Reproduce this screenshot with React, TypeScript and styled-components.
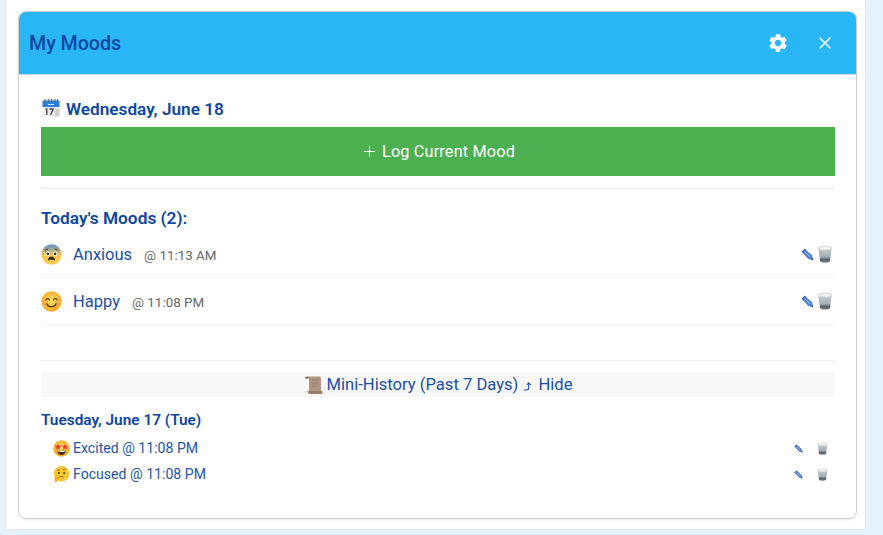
import React from "react";
import styled, { createGlobalStyle } from "styled-components";
import { MdSettings } from "react-icons/md";
import { X, Plus } from "lucide-react";

const Global = createGlobalStyle`
  html, body { margin: 0; padding: 0; background: #e3f2fd; font-family: Roboto, "Liberation Sans", sans-serif; overflow: hidden; }
`;

const Page = styled.div`
  width: 883px;
  height: 535px;
  padding: 0 17px 5px 5px;
  box-sizing: border-box;
`;
const Sheet = styled.div`
  height: 100%;
  background: #fff;
  border: 1px solid #e4e9ee;
  border-top: none;
  box-sizing: border-box;
  padding: 11px 8px 0 12px;
`;
const Modal = styled.div`
  height: 508px;
  box-sizing: border-box;
  border: 1px solid #cfcfcf;
  border-radius: 8px;
  box-shadow: 0 1px 2px rgba(0,0,0,.08);
  overflow: hidden;
`;
const Header = styled.header`
  height: 63px;
  background: #29b6f6;
  border-bottom: 1px solid #d4d8da;
  display: flex;
  align-items: center;
  padding: 0 21px 0 10px;
  box-sizing: border-box;
`;
const Title = styled.h2`
  margin: 0;
  flex: 1;
  font-size: 19.6px;
  font-weight: 500;
  color: #0d47a1;
`;
const IconBtn = styled.span<{ $gap?: number }>`
  display: flex;
  color: #fff;
  margin-left: ${p => p.$gap ?? 0}px;
`;
const Body = styled.div`
  padding: 23px 21px 0 22px;
`;
const DateRow = styled.h3`
  margin: 0 0 8px;
  height: 21px;
  display: flex;
  align-items: center;
  gap: 5px;
  font-size: 17.2px;
  font-weight: 600;
  color: #0d47a1;
`;
const LogButton = styled.button`
  width: 100%;
  height: 49px;
  border: none;
  background: #4caf50;
  color: #fff;
  font: 400 16.3px Roboto, sans-serif;
  display: flex;
  align-items: center;
  justify-content: center;
  gap: 4px;
  letter-spacing: .15px;
`;
const Divider = styled.div<{ $top: number }>`
  height: 1px;
  background: #eeeeee;
  margin-top: ${p => p.$top}px;
`;
const SectionTitle = styled.h4`
  margin: 19px 0 3px;
  font-size: 17.3px;
  line-height: 20px;
  font-weight: 600;
  color: #0d47a1;
`;
const MoodRow = styled.div`
  height: 47px;
  display: flex;
  align-items: center;
  border-bottom: 1px solid #f3f3f3;
  box-sizing: border-box;
`;
const MoodName = styled.span`
  margin-left: 11px;
  font-size: 16.5px;
  color: #1a4fa6;
`;
const MoodTime = styled.span`
  margin-left: 12px;
  margin-top: 2px;
  font-size: 13.4px;
  color: #666;
`;
const Spacer = styled.span`flex: 1;`;
const Actions = styled.span<{ $gap: number; $right: number }>`
  display: flex;
  align-items: center;
  gap: ${p => p.$gap}px;
  margin-right: ${p => p.$right}px;
`;
const HistoryBar = styled.div`
  margin-top: 11px;
  height: 25px;
  background: #f8f8f8;
  display: flex;
  align-items: center;
  justify-content: center;
  gap: 4px;
  font-size: 16.6px;
  color: #1a4fa6;
`;
const DayTitle = styled.div`
  margin-top: 14px;
  font-size: 15.4px;
  line-height: 18px;
  font-weight: 600;
  color: #0d47a1;
`;
const DayRow = styled.div`
  height: 26px;
  padding-left: 12px;
  display: flex;
  align-items: center;
  gap: 3px;
  font-size: 14.1px;
  color: #2355a8;
  &:first-of-type { margin-top: 6px; }
`;
const Days = styled.div``;

const Face = ({ size, children }: { size: number; children: React.ReactNode }) => (
  <svg width={size} height={size} viewBox="0 0 32 32" style={{ flex: "none" }}>
    <defs>
      <radialGradient id="fg" cx="50%" cy="45%" r="55%">
        <stop offset="0" stopColor="#fde26a" /><stop offset="1" stopColor="#f5a623" />
      </radialGradient>
      <linearGradient id="fb" x1="0" y1="0" x2="0" y2="1">
        <stop offset="0" stopColor="#5e8fd0" /><stop offset=".55" stopColor="#f5c94a" />
      </linearGradient>
    </defs>
    {children}
  </svg>
);
const Fearful = ({ size }: { size: number }) => (
  <Face size={size}>
    <circle cx="16" cy="16" r="15.500" fill="url(#fb)" />
    <circle cx="10.500" cy="15" r="3.400" fill="#fff" /><circle cx="21.500" cy="15" r="3.400" fill="#fff" />
    <circle cx="10.500" cy="15" r="2" fill="#3b2a1a" /><circle cx="21.500" cy="15" r="2" fill="#3b2a1a" />
    <path d="M6 9.500 11 7.500M26 9.500 21 7.500" stroke="#3b2a1a" strokeWidth="1.400" fill="none" />
    <path d="M10.500 25c0-4 2.400-6 5.500-6s5.500 2 5.500 6c-3-1.500-8-1.500-11 0z" fill="#3b2a1a" />
  </Face>
);
const Smiling = ({ size }: { size: number }) => (
  <Face size={size}>
    <circle cx="16" cy="16" r="15.500" fill="url(#fg)" />
    <circle cx="7" cy="19" r="3.500" fill="#f58a5c" opacity=".55" /><circle cx="25" cy="19" r="3.500" fill="#f58a5c" opacity=".55" />
    <path d="M7.500 13.500c1-2.500 4.500-2.500 5.500 0M19 13.500c1-2.500 4.500-2.500 5.500 0" stroke="#4a3418" strokeWidth="1.700" fill="none" strokeLinecap="round" />
    <path d="M9 19.500c2 6 12 6 14 0" stroke="#4a3418" strokeWidth="1.800" fill="none" strokeLinecap="round" />
  </Face>
);
const Star = ({ x, y }: { x: number; y: number }) => (
  <path transform={`translate(${x} ${y})`} d="M0-6 1.800-2 6-1.800 2.800 1 3.800 5.200 0 3 -3.800 5.200-2.800 1-6-1.800-1.800-2z" fill="#e53935" />
);
const StarStruck = ({ size }: { size: number }) => (
  <Face size={size}>
    <circle cx="16" cy="16" r="15.500" fill="url(#fg)" />
    <Star x={9.500} y={13} /><Star x={22.500} y={13} />
    <path d="M8 20h16c0 5-3.500 8-8 8s-8-3-8-8z" fill="#4a2c16" />
    <path d="M10 20.500h12v2H10z" fill="#fff" />
  </Face>
);
const Thinking = ({ size }: { size: number }) => (
  <Face size={size}>
    <circle cx="16" cy="14.500" r="14.500" fill="#f9c733" />
    <path d="M8 8.500c1.500-1.500 4-1.500 5 0M19 7c1.500-1.500 4-1 5 .5" stroke="#5a3d14" strokeWidth="1.500" fill="none" />
    <circle cx="11" cy="13" r="1.900" fill="#5a3d14" /><circle cx="21" cy="13" r="1.900" fill="#5a3d14" />
    <path d="M12 21c2.500-1.500 5.500-1.500 8 0" stroke="#5a3d14" strokeWidth="1.500" fill="none" />
    <path d="M3 22c3-1.500 6-1.500 9 0 1 1 .5 2-.5 2.500l-2 .5c0 3-2 5.500-4 5.500S2.500 26 3 22z" fill="#f2ad1f" />
  </Face>
);
const Calendar = () => (
  <svg width="20" height="20" viewBox="0 0 20 20" style={{ flex: "none", marginTop: "-2px" }}>
    <rect x="1.500" y="2.500" width="17" height="16" rx="1" fill="#eeeeee" />
    <rect x="14" y="11" width="4.500" height="7.500" fill="#cfcfcf" />
    <path d="M1.500 3.500a1 1 0 0 1 1-1h15a1 1 0 0 1 1 1V9h-17z" fill="#2f80d8" />
    <path d="M4 1v3M7.300 1v3M10.600 1v3M14 1v3M16.500 1v3" stroke="#5a6770" strokeWidth="1.100" />
    <path d="M7 6.500h6" stroke="#cfe4f8" strokeWidth="1" />
    <path d="M4.500 11h1.300v6M8.500 11h3.700L9.600 17" stroke="#444" strokeWidth="1.300" fill="none" />
  </svg>
);
const Scroll = () => (
  <svg width="19" height="20" viewBox="0 0 19 20" style={{ flex: "none" }}>
    <path d="M3 1.500h12.500c1 0 1.500 1 1.500 2v12.500H5V3.500C5 2.500 4 1.500 3 1.500z" fill="#b09583" />
    <path d="M3 1.500C1.500 1.500 1 2.500 1 3.500h4C5 2.500 4 1.500 3 1.500z" fill="#7d6351" />
    <path d="M7.500 5h7M7.500 8h7M7.500 11h7" stroke="#988070" strokeWidth=".9" />
    <path d="M3.500 16h14c.7 0 1 .7 1 1.500s-.8 1.500-1.500 1.500H6c-1.300 0-2.500-1.300-2.500-3z" fill="#977c69" />
  </svg>
);
const Pencil = ({ size }: { size: number }) => (
  <svg width={size} height={size} viewBox="0 0 14 14" style={{ flex: "none" }}>
    <path d="M.8 4 4 .8 11.800 7.800 13.300 13.300 7.800 11.800z" fill="#4f7fd6" />
    <path d="M.8 4 4 .8 5.300 2 2 5.300z" fill="#3a68c0" />
    <path d="M3.800 4 9.800 9.600" stroke="#b9d0f5" strokeWidth="1" />
    <path d="M11 12.500 13.300 13.300 12.500 11z" fill="#334" />
  </svg>
);
const Trash = ({ size }: { size: number }) => (
  <svg width={size} height={size} viewBox="0 0 18 18" style={{ flex: "none" }}>
    <defs>
      <linearGradient id="tg" x1="0" y1="0" x2="0" y2="1">
        <stop offset="0" stopColor="#c6cdd1" /><stop offset=".6" stopColor="#a4adb3" /><stop offset=".78" stopColor="#59636a" /><stop offset="1" stopColor="#6c767c" />
      </linearGradient>
    </defs>
    <path d="M2.300 3.500 4 16c.1.900 1.500 1.500 5 1.500s4.900-.6 5-1.500l1.700-12.500z" fill="url(#tg)" />
    <ellipse cx="9" cy="3" rx="7.200" ry="2.300" fill="#d6dadc" />
    <ellipse cx="9" cy="3.300" rx="5.500" ry="1.300" fill="#f2f3f4" />
  </svg>
);
const ReturnArrow = () => (
  <svg width="12" height="12" viewBox="0 0 12 12" style={{ flex: "none", margin: "2px 0 0" }}>
    <path d="M2 10h2.500c1.400 0 2.200-.9 2.200-2.200V3.500M4.700 5 6.700 2.800 8.700 5" stroke="#1a4fa6" strokeWidth="1.100" fill="none" />
  </svg>
);

const today = [
  { face: <Fearful size={21} />, name: "Anxious", time: "@ 11:13 AM" },
  { face: <Smiling size={21} />, name: "Happy", time: "@ 11:08 PM" },
];
const past = [
  { face: <StarStruck size={17} />, text: "Excited @ 11:08 PM" },
  { face: <Thinking size={17} />, text: "Focused @ 11:08 PM" },
];

export default function App() {
  return (
    <Page>
      <Global />
      <Sheet>
        <Modal>
          <Header>
            <Title>My Moods</Title>
            <IconBtn><MdSettings size={22} /></IconBtn>
            <IconBtn $gap={26}><X size={20} strokeWidth={1.8} /></IconBtn>
          </Header>
          <Body>
            <DateRow><Calendar />Wednesday, June 18</DateRow>
            <LogButton><Plus size={17} strokeWidth={1.5} />Log Current Mood</LogButton>
            <Divider $top={12} />
            <SectionTitle>Today's Moods (2):</SectionTitle>
            {today.map(m => (
              <MoodRow key={m.name}>
                {m.face}
                <MoodName>{m.name}</MoodName>
                <MoodTime>{m.time}</MoodTime>
                <Spacer />
                <Actions $gap={2} $right={1}><Pencil size={13} /><Trash size={18} /></Actions>
              </MoodRow>
            ))}
            <Divider $top={35} />
            <HistoryBar><Scroll />Mini-History (Past 7 Days)<ReturnArrow />Hide</HistoryBar>
            <DayTitle>Tuesday, June 17 (Tue)</DayTitle>
            <Days>
              {past.map(m => (
                <DayRow key={m.text}>
                  {m.face}{m.text}
                  <Spacer />
                  <Actions $gap={13} $right={6}><Pencil size={9} /><Trash size={13} /></Actions>
                </DayRow>
              ))}
            </Days>
          </Body>
        </Modal>
      </Sheet>
    </Page>
  );
}
